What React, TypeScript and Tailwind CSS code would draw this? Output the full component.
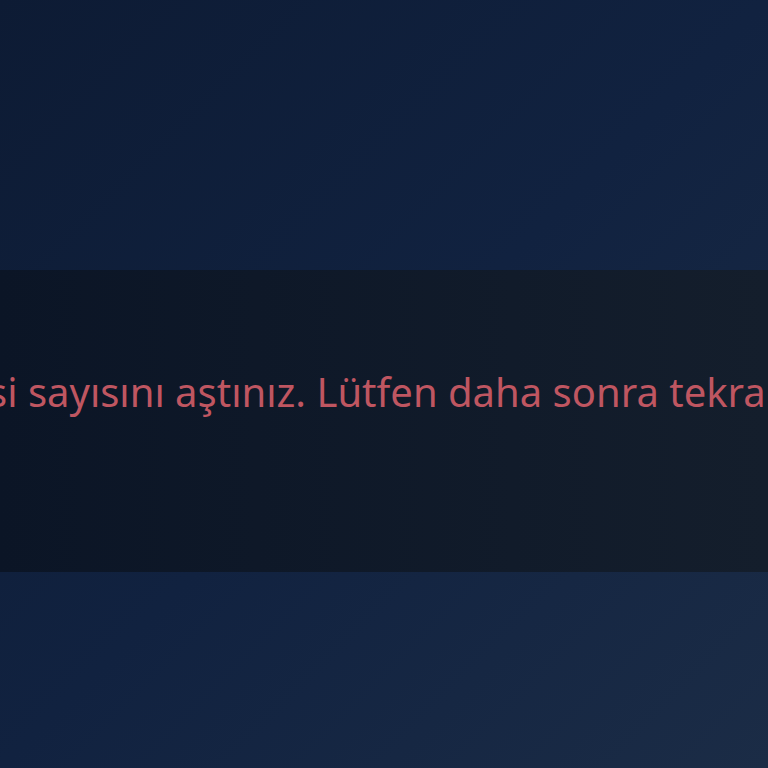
const App = () => {
    return (
        <div
            className="h-[768px] w-[768px] overflow-hidden flex flex-col bg-gradient-to-br from-[#0d1b34] via-[#112240] to-[#1b2c46]"
            style={{ fontFamily: '"Noto Sans", "Open Sans", sans-serif' }}
        >
            <div className="h-[270px] shrink-0"></div>

            {/* error band */}
            <div className="h-[302px] shrink-0 bg-gradient-to-r from-[#0b1526] to-[#141e2c] flex flex-col justify-center overflow-hidden">
                <div className="flex whitespace-nowrap text-[40px] leading-none text-[#bf5661] mt-[-58px]">
                    <span className="w-0 shrink-0 flex justify-end">Kısa süre içinde izin verilen giriş deneme</span>
                    <span className="ml-[-12px]">si sayısını aştınız. Lütfen daha sonra tekrar deneyin.</span>
                </div>
            </div>

            <div className="grow"></div>
        </div>
    )
}

export default App;
